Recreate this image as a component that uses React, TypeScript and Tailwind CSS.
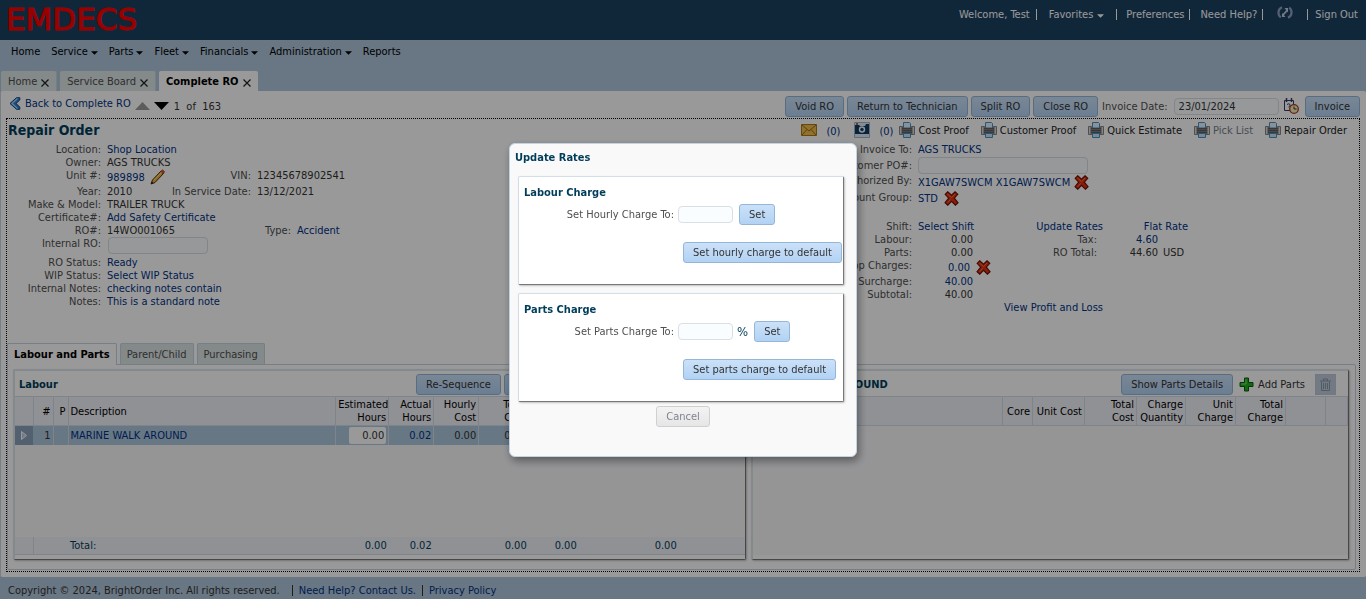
import type { ReactNode } from 'react';

const btn =
  'h-[21px] shrink-0 rounded-[3px] border border-[#94b6d9] bg-linear-to-b from-[#cbe1f8] to-[#b2d2f4] px-[9px] leading-[17px] whitespace-nowrap text-[#333]';
const field = 'rounded-sm border border-[#d9dfe3] bg-[#fafdff] px-1 text-[#333] outline-none';
const link = 'text-[#003286]';

function Caret() {
  return (
    <svg className="mt-[3px] h-1 w-[7px]" viewBox="0 0 8 4">
      <path d="M0 0h8L4 4z" fill="currentColor" />
    </svg>
  );
}

function Printer() {
  return (
    <svg className="size-4 shrink-0" viewBox="0 0 16 16">
      <path d="M.5 4.500h3v2h9v-2h3v8H.5z" fill="#a9a9a9" stroke="#858585" />
      <path d="M1.500 5v7M14.500 5v7" stroke="#dadada" />
      <path d="M4.500 6V.5h6l1 1V6z" fill="#e6f2fc" stroke="#4a8fc4" />
      <path d="M3 6h10v5.500H3z" fill="#5e5e5e" />
      <path d="M3 7.500h10M3 9.500h10" stroke="#7c7c7c" />
      <path d="M4.500 11.500h7v4h-7z" fill="#c9e3f8" stroke="#4a8fc4" />
    </svg>
  );
}

function Cross() {
  return (
    <svg className="size-[15px] shrink-0" viewBox="0 0 16 16">
      <path
        d="M1.200 3.500 4 .8 8 4.500 11.800.8l2.900 2.700L11 7.700l4 4.800-2.800 2.700L8 11l-4 4.200-2.900-2.700L5 7.700z"
        fill="#e2300f"
        stroke="#6e1206"
        strokeWidth="1.200"
      />
      <path d="M3.500 3 8 7l4-4M4 12.500 7 9" stroke="#f7764e" fill="none" />
    </svg>
  );
}

function Mail() {
  return (
    <svg className="h-4 w-4" viewBox="0 0 16 16">
      <path d="M.5 2.500h15v11H.5z" fill="#f0bd4e" stroke="#a8781c" />
      <path d="M1 3l7 6 7-6M1 13l5-5.500M15 13l-5-5.500" fill="none" stroke="#9b6c12" />
    </svg>
  );
}

function Camera() {
  return (
    <svg className="h-4 w-4" viewBox="0 0 16 16">
      <path d="M.5.5h15v15H.5z" fill="#dfe9f4" stroke="#9fb6d0" />
      <path d="M1 3h4l1 1h5l1-2h3v10H1z" fill="#0d3d63" />
      <path d="M2 1h2v2H2z" fill="#d05a28" />
      <circle cx="8" cy="7.500" r="3.200" fill="#f2f6fa" />
      <circle cx="8" cy="7.500" r="1.700" fill="#123f66" />
    </svg>
  );
}

function Pencil() {
  return (
    <svg className="size-4 shrink-0" viewBox="0 0 16 16">
      <path d="M1 15l1.500-4L11 2l2.500 2.500-8.500 9z" fill="#f0ae3c" stroke="#4c300a" />
      <path d="M10.500 2.500 12.500.8l2.200 2-1.700 2z" fill="#e05a2c" stroke="#7a2c10" strokeWidth=".6" />
      <path d="M3.500 11.500l8-8" stroke="#ffe08a" />
      <path d="M1 15l.8-2.500 1.700 1.700z" fill="#222" />
    </svg>
  );
}

function CalendarClock() {
  return (
    <svg className="size-4 shrink-0" viewBox="0 0 16 16">
      <path d="M1.500 2.500h9v10h-9z" fill="#fff" stroke="#3a3a6c" />
      <path d="M3.500 0v4M8.500 0v4" stroke="#3a3a6c" strokeWidth="1.500" />
      <path d="M4 6.500q2-1.500 3 0t-1.500 2.500" fill="none" stroke="#3a3a6c" />
      <circle cx="11" cy="11" r="4.300" fill="#fbe9b0" stroke="#a23a28" strokeWidth="1.300" />
      <path d="M11 8.500V11h2.500" fill="none" stroke="#333" />
    </svg>
  );
}

function Row({ label, h = 'h-[13px]', labelWidth = 'w-[94px]', children }: {
  label: string; h?: string; labelWidth?: string; children?: ReactNode;
}) {
  return (
    <div className={`flex ${h}`}>
      <span className={`${labelWidth} shrink-0 text-right whitespace-nowrap text-[#4f4f4f]`}>{label}</span>
      <div className="flex min-w-0 flex-1 pl-[6px] whitespace-nowrap">{children}</div>
    </div>
  );
}

function Bar() {
  return <span className="h-[11px] w-px bg-current" />;
}

function Header() {
  return (
    <header className="flex h-10 justify-between bg-[#1c4162] text-white">
      <div className="pl-[6px] font-['DejaVu_Sans'] text-[31px] leading-[38px] text-[#f00] [-webkit-text-stroke:1px_#f00]">EMDECS</div>
      <nav aria-label="Account" className="flex h-7 items-center pr-2">
        <span className="mr-[6px]">Welcome, Test</span>
        <Bar />
        <button className="ml-3 flex items-center gap-1">Favorites <Caret /></button>
        <span className="mr-[9px] ml-3 flex"><Bar /></span>
        <a href="#preferences" className="mr-[5px]">Preferences</a>
        <Bar />
        <a href="#help" className="mr-[5px] ml-[10px]">Need Help?</a>
        <Bar />
        <svg className="mx-[14px] mb-1 h-[13px] w-4" viewBox="0 0 16 13" fill="none" stroke="#8f9fc4" strokeWidth="2.200">
          <path d="M5 1.300C.5 3 .5 9 3.800 11.300" />
          <path d="M11 11.700C15.500 10 15.500 4 12.200 1.700" />
          <path d="M5.500 9.500l5-5.500" stroke="#c3cde2" strokeWidth="1.800" />
          <path d="M5 7v4h3.500zM11 6.500V2H7.500z" fill="#c3cde2" stroke="none" />
        </svg>
        <Bar />
        <a href="#signout" className="ml-[7px]">Sign Out</a>
      </nav>
    </header>
  );
}

const menu = [
  ['Home', false], ['Service', true], ['Parts', true], ['Fleet', true],
  ['Financials', true], ['Administration', true], ['Reports', false],
] as const;

function Menu() {
  return (
    <nav aria-label="Main" className="flex h-[31px] gap-[11px] pt-1 pl-[11px] text-black">
      {menu.map(([name, more]) => (
        <button key={name} className="flex h-[15px] items-center gap-[3px]">
          {name}
          {more && <Caret />}
        </button>
      ))}
    </nav>
  );
}

function PageTabs() {
  const tabs = ['Home', 'Service Board', 'Complete RO'];
  return (
    <div className="flex h-5 gap-[3px] pl-px">
      {tabs.map((t, i) => (
        <div
          key={t}
          className={`flex items-center gap-1 rounded-t-xs px-[7px] ${i === 2 ? 'bg-white font-bold text-black' : 'border-r border-[#c8d0d4] bg-[#dde4e5] text-[#4f4f4f]'}`}
        >
          <button>{t}</button>
          <button aria-label={`Close ${t}`}>
            <svg className="mt-[3px] size-2 text-[#222]" viewBox="0 0 8 8">
              <path d="M.5.5l7 7M7.500.5l-7 7" stroke="currentColor" strokeWidth="1.200" />
            </svg>
          </button>
        </div>
      ))}
    </div>
  );
}

function Toolbar() {
  return (
    <div className="flex h-[27px] items-center pt-[3px] pr-[6px] pl-2">
      <a href="#back" className={`-mt-[5px] flex items-center gap-[3px] ${link}`}>
        <svg className="size-[13px]" viewBox="0 0 13 13">
          <path d="M7.500.7 1 6.500l6.500 5.800h3.300V10L7 6.500 10.800 3V.7z" fill="#2f7fd0" stroke="#174a84" />
          <path d="M8.500 1.500 3 6.500l5.500 5" fill="none" stroke="#a8d4fb" strokeWidth="1.200" />
        </svg>
        Back to Complete RO
      </a>
      <button aria-label="Previous" className="ml-1">
        <svg className="h-2 w-[15px]" viewBox="0 0 15 8"><path d="M0 8h15L7.500 0z" fill="#999" /></svg>
      </button>
      <button aria-label="Next" className="ml-1">
        <svg className="h-2 w-[15px]" viewBox="0 0 15 8"><path d="M0 0h15L7.500 8z" fill="#000" /></svg>
      </button>
      <span className="ml-[5px] text-[#333]">1&nbsp; of &nbsp;163</span>
      <div className="ml-auto flex items-center gap-[3px]">
        <button className={btn}>Void RO</button>
        <button className={btn}>Return to Technician</button>
        <button className={btn}>Split RO</button>
        <button className={btn}>Close RO</button>
        <label htmlFor="invoice-date" className="ml-px text-[#4f4f4f]">Invoice Date:</label>
        <input id="invoice-date" defaultValue="23/01/2024" className={`${field} ml-[3px] h-[17px] w-[105px]`} />
        <button aria-label="Pick date" className="mr-[3px] ml-px"><CalendarClock /></button>
        <button className={btn}>Invoice</button>
      </div>
    </div>
  );
}

function ActionRow() {
  const prints = ['Cost Proof', 'Customer Proof', 'Quick Estimate', 'Pick List', 'Repair Order'];
  return (
    <div className="flex h-6 items-center pr-3 pb-[2px] pl-px">
      <h1 className="mr-auto text-sm font-bold text-[#003d5b]">Repair Order</h1>
      <button className={`flex items-center gap-[9px] ${link}`}><Mail /><span className="pt-[3px]">(0)</span></button>
      <button className={`ml-[14px] flex items-center gap-[9px] ${link}`}><Camera /><span className="pt-[3px]">(0)</span></button>
      <div className="ml-[6px] flex gap-3">
        {prints.map((p) => (
          <button key={p} className={`flex items-center gap-[3px] ${p === 'Pick List' ? 'text-[#767f8c]' : 'text-[#222]'}`}>
            <Printer />{p}
          </button>
        ))}
      </div>
    </div>
  );
}

function Details() {
  const r = 'w-[229px]';
  return (
    <div className="grid h-[200px] grid-cols-2 leading-[13px] text-[#333]">
      <div>
        <Row label="Location:"><a href="#location" className={link}>Shop Location</a></Row>
        <Row label="Owner:">AGS TRUCKS</Row>
        <Row label="Unit #:" h="h-4">
          <span className="flex w-[94px] items-center gap-[5px]"><a href="#unit" className={link}>989898</a><Pencil /></span>
          <span className="w-[50px] text-right text-[#4f4f4f]">VIN:</span>
          <span className="pl-[6px]">12345678902541</span>
        </Row>
        <Row label="Year:">
          <span className="w-9">2010</span>
          <span className="w-[108px] text-right text-[#4f4f4f]">In Service Date:</span>
          <span className="pl-[6px]">13/12/2021</span>
        </Row>
        <Row label="Make &amp; Model:">TRAILER TRUCK</Row>
        <Row label="Certificate#:"><a href="#certificate" className={link}>Add Safety Certificate</a></Row>
        <Row label="RO#:">
          <span className="w-[94px]">14WO001065</span>
          <span className="w-[90px] text-right text-[#4f4f4f]">Type:</span>
          <a href="#type" className={`pl-[6px] ${link}`}>Accident</a>
        </Row>
        <div className="flex h-[19px]">
          <label htmlFor="internal-ro" className="w-[94px] shrink-0 text-right text-[#4f4f4f]">Internal RO:</label>
          <input id="internal-ro" className={`${field} ml-[7px] h-[17px] w-[100px]`} />
        </div>
        <Row label="RO Status:"><a href="#status" className={link}>Ready</a></Row>
        <Row label="WIP Status:"><a href="#wip" className={link}>Select WIP Status</a></Row>
        <Row label="Internal Notes:"><a href="#inotes" className={link}>checking notes contain</a></Row>
        <Row label="Notes:"><a href="#notes" className={link}>This is a standard note</a></Row>
      </div>
      <div>
        <Row label="Invoice To:" labelWidth={r}><a href="#invoice-to" className={link}>AGS TRUCKS</a></Row>
        <div className="flex h-[18px] items-center">
          <label htmlFor="po" className="w-[229px] shrink-0 text-right text-[#4f4f4f]">Customer PO#:</label>
          <input id="po" className={`${field} ml-[6px] h-[17px] w-[170px]`} />
        </div>
        <Row label="Authorized By:" labelWidth={r} h="h-[17px]">
          <span className="flex items-center gap-1"><a href="#auth" className={link}>X1GAW7SWCM X1GAW7SWCM</a><Cross /></span>
        </Row>
        <Row label="Discount Group:" labelWidth={r} h="h-[29px]">
          <span className="flex h-[14px] items-center gap-[6px]"><a href="#group" className={link}>STD</a><Cross /></span>
        </Row>
        <Row label="Shift:" labelWidth={r}>
          <a href="#shift" className={`w-[55px] ${link}`}>Select Shift</a>
          <a href="#rates" className={`w-[130px] text-right ${link}`}>Update Rates</a>
          <a href="#flat" className={`w-[85px] text-right ${link}`}>Flat Rate</a>
        </Row>
        <Row label="Labour:" labelWidth={r}>
          <span className="w-[55px] text-right">0.00</span>
          <span className="w-[124px] text-right text-[#4f4f4f]">Tax:</span>
          <a href="#tax" className={`w-[61px] text-right ${link}`}>4.60</a>
        </Row>
        <Row label="Parts:" labelWidth={r}>
          <span className="w-[55px] text-right">0.00</span>
          <span className="w-[124px] text-right text-[#4f4f4f]">RO Total:</span>
          <span className="w-[61px] text-right">44.60</span>
          <span className="pl-[5px]">USD</span>
        </Row>
        <Row label="Shop Charges:" labelWidth={r} h="h-4">
          <span className="flex items-center gap-[6px]"><a href="#shop" className={`w-[52px] text-right ${link}`}>0.00</a><Cross /></span>
        </Row>
        <Row label="Surcharge:" labelWidth={r}><a href="#surcharge" className={`w-[55px] text-right ${link}`}>40.00</a></Row>
        <Row label="Subtotal:" labelWidth={r}><span className="w-[55px] text-right">40.00</span></Row>
        <Row label="" labelWidth={r}><a href="#profit" className={`w-[185px] text-right ${link}`}>View Profit and Loss</a></Row>
      </div>
    </div>
  );
}

const panel = 'flex min-w-0 basis-0 flex-col rounded-xs border-t-2 border-l-2 border-r border-b border-t-[#dbe4ea] border-l-[#dbe4ea] border-r-[#777] border-b-[#777] shadow-[1px_1px_2px_#9999]';
const cell = 'border-r border-[#d3dde6] px-[2px] font-normal';
const num = `${cell} text-right`;
const head = `${cell} text-right text-black`;

function LabourPanel() {
  const cols = ['w-[18px]', 'w-5', 'w-[15px]', '', 'w-[53px]', 'w-[45px]', 'w-[45px]', 'w-[50px]', 'w-[50px]', 'w-[50px]', 'w-[50px]', 'w-[66px]'];
  const group = <colgroup>{cols.map((c, i) => <col key={i} className={c} />)}</colgroup>;
  return (
    <section className={`${panel} grow-[733]`}>
      <div className="flex h-[25px] items-center gap-[3px] pt-px pl-1">
        <h2 className="w-[394px] font-bold text-[#003d5b]">Labour</h2>
        <button className={btn}>Re-Sequence</button>
        <button className={btn}>Add Labour</button>
      </div>
      <div className="flex flex-1 flex-col bg-[#f8f8fb]">
        <table className="w-full table-fixed border-collapse leading-[13px]">
          {group}
          <thead>
            <tr className="h-[29px] border-y border-[#d3dde6] bg-[#f0f2f8]">
              <th className={head} />
              <th className={head}>#</th>
              <th className={head}>P</th>
              <th className={`${cell} text-left text-black`}>Description</th>
              <th className={head}>Estimated Hours</th>
              <th className={head}>Actual Hours</th>
              <th className={head}>Hourly Cost</th>
              <th className={head}>Total Cost</th>
              <th className={head} />
              <th className={head} />
              <th className={head} />
              <th />
            </tr>
          </thead>
          <tbody>
            <tr className="h-[19px] bg-[#aec6dc] text-[#333]">
              <td className="bg-[#8ba1ba]">
                <svg className="mx-auto h-[9px] w-[6px]" viewBox="0 0 6 9"><path d="M.5.5l5 4-5 4z" fill="#b6cde6" stroke="#fff" /></svg>
              </td>
              <td className={num}>1</td>
              <td className={num} />
              <td className={`${cell} text-left ${link}`}>MARINE WALK AROUND</td>
              <td className={num}>
                <input aria-label="Estimated hours" defaultValue="0.00" className="ml-auto block h-[17px] w-[37px] rounded-xs bg-white pr-[2px] text-right" />
              </td>
              <td className={`${num} ${link}`}>0.02</td>
              <td className={num}>0.00</td>
              <td className={num}>0.00</td>
              <td className={num} />
              <td className={num} />
              <td className={num} />
              <td />
            </tr>
          </tbody>
        </table>
        <table className="mt-auto w-full table-fixed border-collapse text-[#003d5b]">
          {group}
          <tbody>
            <tr className="h-[18px] border-b border-[#d3dde6] bg-[#f0f2f8]">
              <td className="border-r border-[#d3dde6]" /><td /><td />
              <td className="px-[2px]">Total:</td>
              <td className="px-[2px] text-right">0.00</td>
              <td className="px-[2px] text-right">0.02</td>
              <td />
              <td className="px-[2px] text-right">0.00</td>
              <td className="px-[2px] text-right">0.00</td>
              <td />
              <td className="px-[2px] text-right">0.00</td>
              <td />
            </tr>
          </tbody>
        </table>
      </div>
      <div className="h-1" />
    </section>
  );
}

function PartsPanel() {
  return (
    <section className={`${panel} grow-[598]`}>
      <div className="flex h-[25px] items-center pt-px pr-3 pl-1 whitespace-nowrap">
        <h2 className="mr-auto font-bold text-[#003d5b]">MARINE WALK AROUND</h2>
        <button className={btn}>Show Parts Details</button>
        <button className="ml-[6px] flex items-center gap-1 text-[#333]">
          <svg className="size-[15px]" viewBox="0 0 15 15">
            <path d="M5.500 1h4v4.500H14v4H9.500V14h-4V9.500H1v-4h4.500z" fill="#1fb01f" stroke="#0a5c0a" />
            <path d="M7 2.500v4.500H2.500" fill="none" stroke="#7be07b" />
          </svg>
          Add Parts
        </button>
        <button aria-label="Delete" className="ml-[10px] flex size-[21px] items-center justify-center border border-[#bcc8d8] bg-[#c2cbdb]">
          <svg className="size-[13px]" viewBox="0 0 13 13" fill="none" stroke="#8896ac">
            <path d="M1 3h11M4.500 3V1h4v2M2.500 3.500v9h8v-9M4.500 5v6M6.500 5v6M8.500 5v6" />
          </svg>
        </button>
      </div>
      <div className="flex-1 bg-[#f8f8fb]">
        <table className="w-full table-fixed border-collapse leading-[13px]">
          <thead>
            <tr className="h-[29px] border-y border-[#d3dde6] bg-[#f0f2f8]">
              <th className={head} />
              <th className={`${head} w-[30px]`}>Core</th>
              <th className={`${head} w-[52px] whitespace-nowrap`}>Unit Cost</th>
              <th className={`${head} w-[52px]`}>Total<br />Cost</th>
              <th className={`${head} w-[49px]`}>Charge Quantity</th>
              <th className={`${head} w-[50px]`}>Unit<br />Charge</th>
              <th className={`${head} w-[50px]`}>Total Charge</th>
              <th className={`${head} w-10`} />
              <th className={`${head} w-[22px]`} />
            </tr>
          </thead>
        </table>
      </div>
      <div className="h-1" />
    </section>
  );
}

function RateCard({ title, label, id, suffix, action }: {
  title: string; label: string; id: string; suffix?: string; action: string;
}) {
  return (
    <section className="mr-3 mb-2 ml-2 h-[109px] rounded-xs border border-t-[#d3dfe8] border-r-[#777] border-b-[#777] border-l-[#d3dfe8] bg-white px-[5px] pt-2 shadow-[1px_1px_2px_#9999]">
      <h3 className="leading-[15px] font-bold text-[#003d5b]">{title}</h3>
      <div className="mt-1 flex h-[21px] items-center">
        <label htmlFor={id} className="w-[150px] text-right text-[#4f4f4f]">{label}</label>
        <input id={id} className={`${field} ml-1 h-[17px] w-[55px]`} />
        {suffix && <span className="ml-1 text-[13px] text-[#003d5b]">{suffix}</span>}
        <button className={`${btn} ml-[6px]`}>Set</button>
      </div>
      <button className={`${btn} mt-[17px] ml-[159px] block`}>{action}</button>
    </section>
  );
}

function UpdateRates() {
  return (
    <div className="fixed inset-0 flex items-center justify-center bg-black/40">
      <div role="dialog" aria-label="Update Rates" className="w-[348px] rounded-md border border-[#c3d3e6] bg-[#f9f9f9] pb-[29px] shadow-[2px_4px_8px_#0006]">
        <h2 className="h-8 pt-[6px] pl-[5px] leading-4 font-bold text-[#003d5b]">Update Rates</h2>
        <RateCard title="Labour Charge" label="Set Hourly Charge To:" id="hourly" action="Set hourly charge to default" />
        <RateCard title="Parts Charge" label="Set Parts Charge To:" id="parts" suffix="%" action="Set parts charge to default" />
        <button className="mx-auto -mt-1 block h-[21px] rounded-[3px] border border-[#d0d0d0] bg-linear-to-b from-[#f3f3f3] to-[#e6e6e6] px-[9px] leading-[17px] text-[#808490]">
          Cancel
        </button>
      </div>
    </div>
  );
}

export default function App() {
  return (
    <div className="flex min-h-screen flex-col bg-[#afc5da] font-['DejaVu_Sans_Condensed','DejaVu_Sans',sans-serif] text-[11px] leading-[15px]">
      <Header />
      <Menu />
      <PageTabs />
      <main className="flex flex-1 flex-col rounded-xs border-l border-[#c5d3e0] bg-white pb-[5px]">
        <Toolbar />
        <div className="mr-[6px] ml-[5px] flex flex-1 flex-col border border-dotted border-black">
          <ActionRow />
          <Details />
          <div className="flex h-[21px] gap-[3px]">
            <button className="relative -mb-px rounded-t-xs border border-b-0 border-[#c5d3e0] bg-white px-[6px] font-bold text-black">Labour and Parts</button>
            <button className="rounded-t-xs border border-b-0 border-[#c5d3e0] bg-[#dde4e5] px-[6px] text-[#4f4f4f]">Parent/Child</button>
            <button className="rounded-t-xs border border-b-0 border-[#c5d3e0] bg-[#dde4e5] px-[6px] text-[#4f4f4f]">Purchasing</button>
          </div>
          <div className="mr-[3px] mb-px flex flex-1 gap-[5px] rounded-xs border border-[#c5d3e0] pt-1 pr-[6px] pb-[9px] pl-[5px]">
            <LabourPanel />
            <PartsPanel />
          </div>
        </div>
      </main>
      <footer className="flex h-[22px] items-center pt-1 pl-2 text-[#333]">
        <span className="mr-3">Copyright © 2024, BrightOrder Inc. All rights reserved.</span>
        <Bar />
        <a href="#contact" className={`mr-[6px] ml-[6px] ${link}`}>Need Help? Contact Us.</a>
        <Bar />
        <a href="#privacy" className={`ml-[6px] ${link}`}>Privacy Policy</a>
      </footer>
      <UpdateRates />
    </div>
  );
}
